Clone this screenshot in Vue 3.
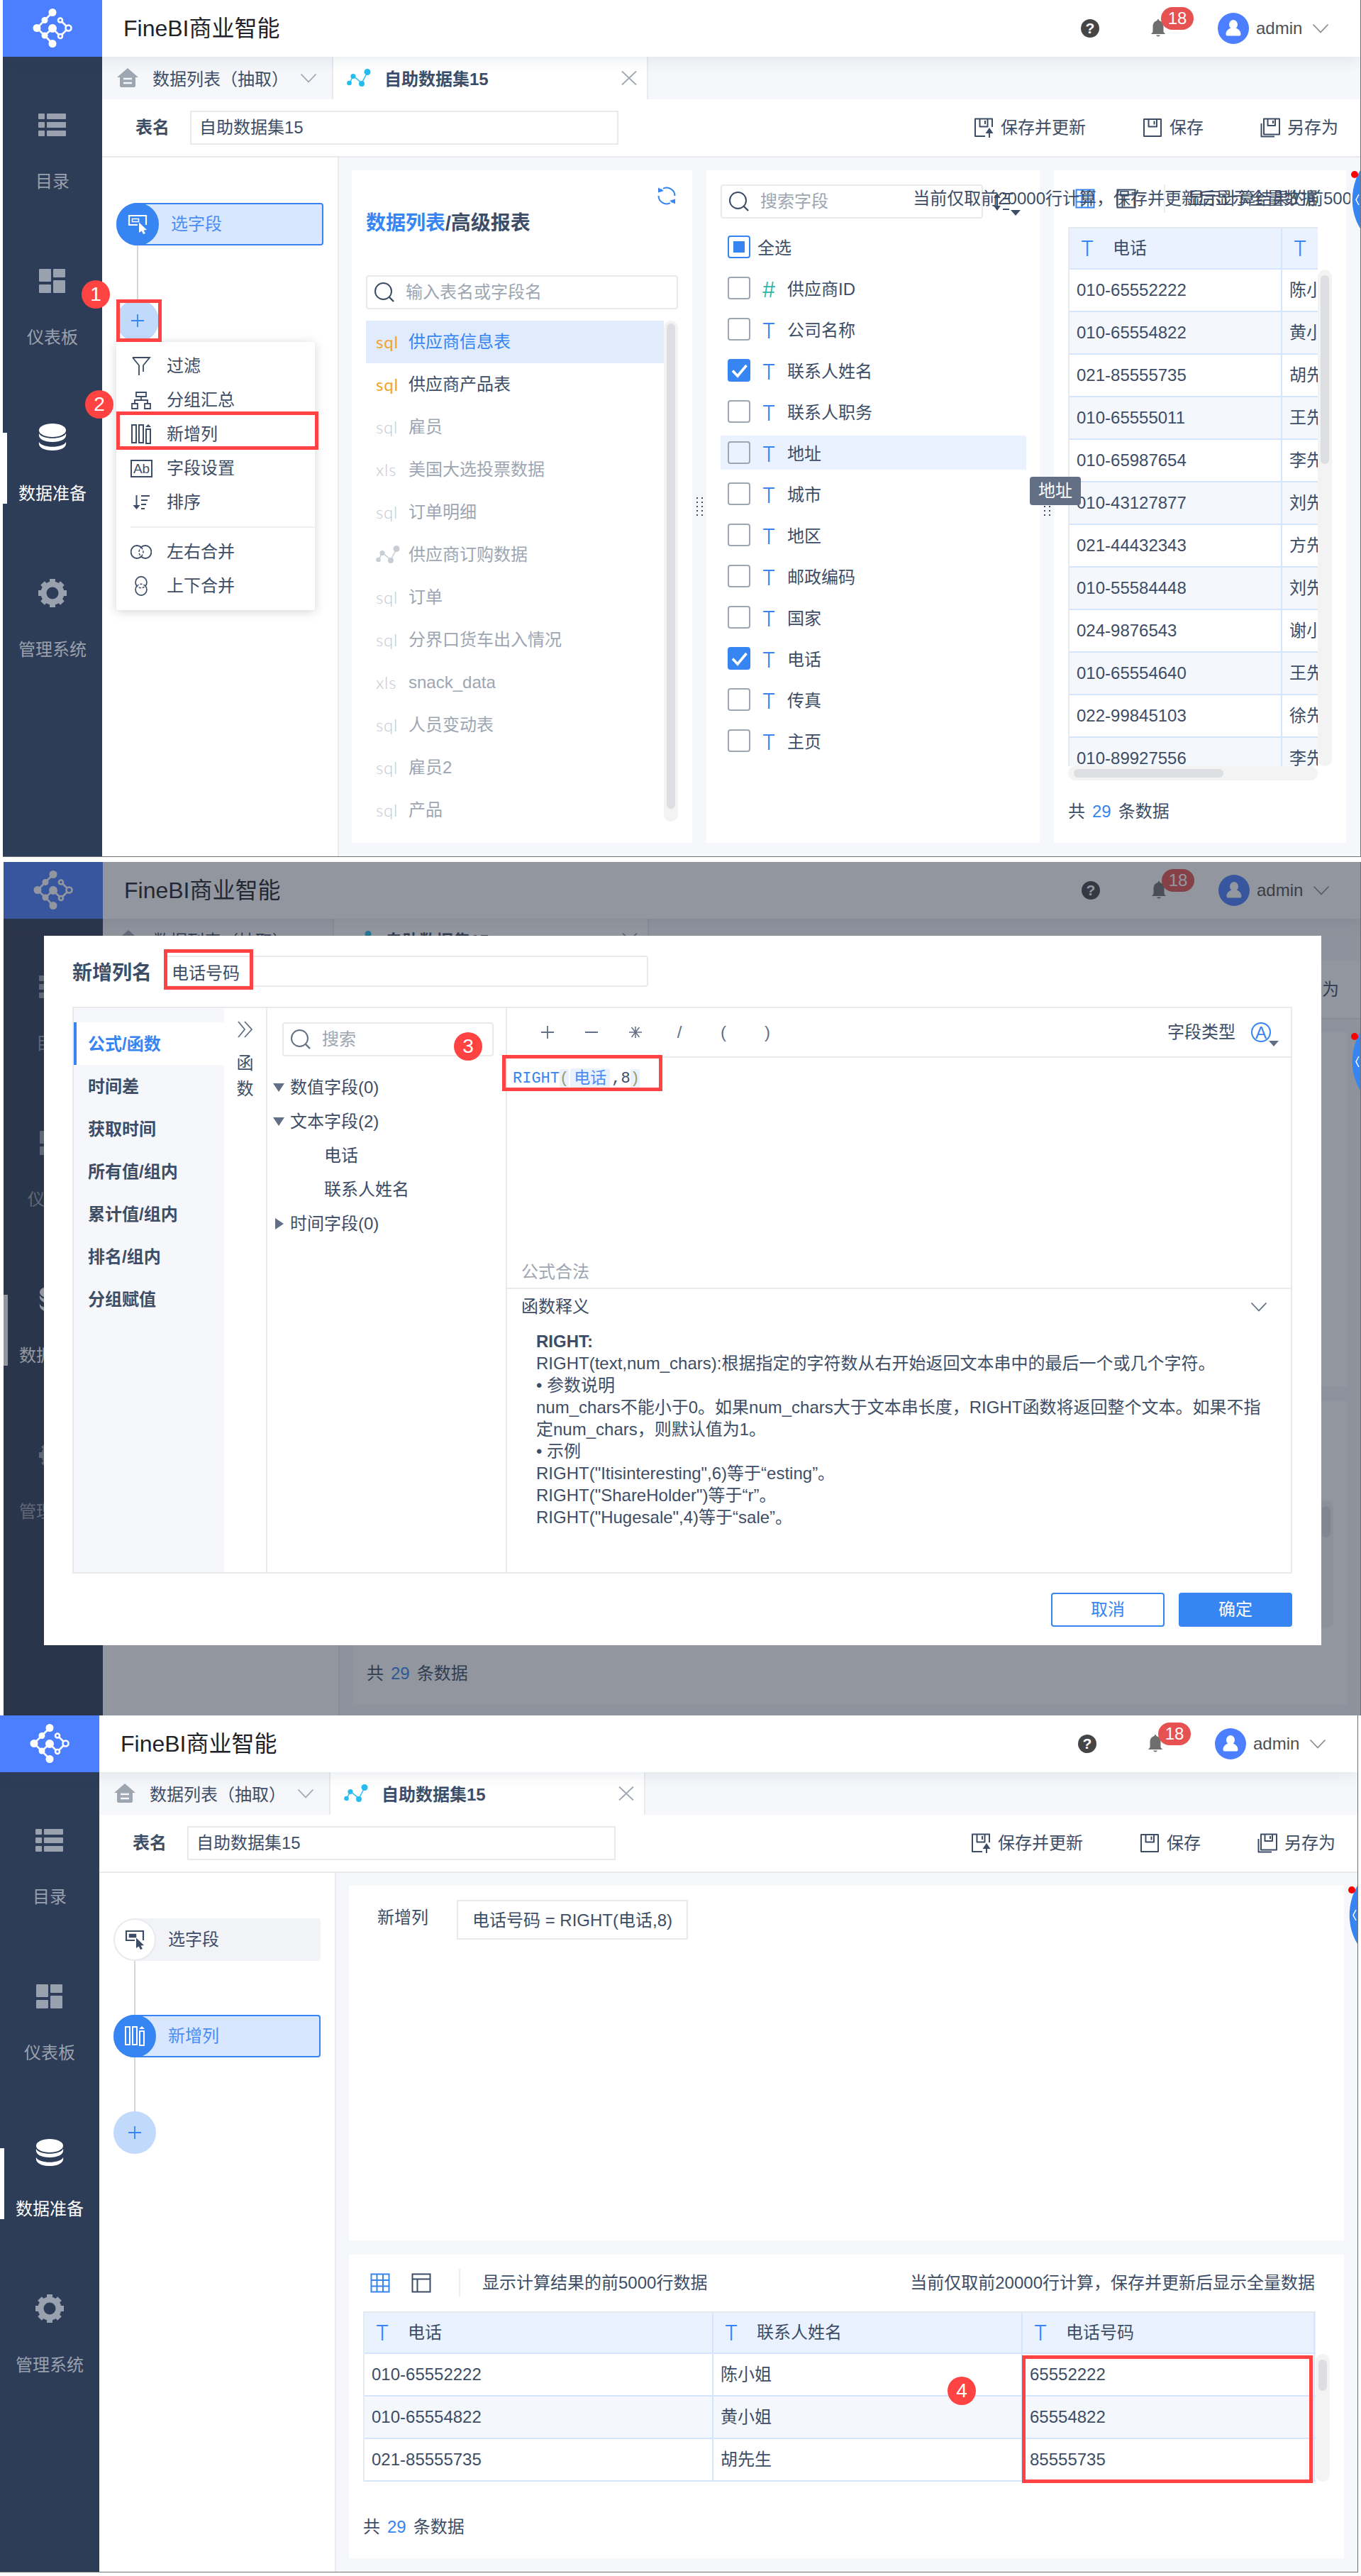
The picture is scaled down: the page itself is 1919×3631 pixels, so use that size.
<template>
  <!-- Icônes partagées -->
  <svg class="sprite" width="0" height="0">
    <symbol id="i-logo" viewBox="0 0 56 56">
      <path d="M28 5.5 17 16.5 6 27.5 17 38 28 49.5M17 38 28 28 39 39M39 16.5 50.5 27.5 39 39" fill="none" stroke="currentColor" stroke-width="2.6" />
      <g fill="currentColor">
        <circle cx="28" cy="5.5" r="5.5" /><circle cx="17" cy="16.5" r="4.5" /><circle cx="6" cy="27.5" r="5.5" />
        <circle cx="17" cy="38" r="4.5" /><circle cx="28" cy="49.5" r="5.5" /><circle cx="28" cy="28" r="6" />
      </g>
      <g fill="var(--ring)" stroke="currentColor" stroke-width="2.6">
        <circle cx="39" cy="16.5" r="3" /><circle cx="50.5" cy="27.5" r="4" /><circle cx="39" cy="39" r="3" />
      </g>
    </symbol>
    <symbol id="i-list" viewBox="0 0 40 34">
      <g fill="currentColor">
        <rect x="0" y="1" width="9" height="8" rx="1" /><rect x="12" y="1" width="27" height="8" rx="1" />
        <rect x="0" y="13" width="9" height="8" rx="1" /><rect x="12" y="13" width="27" height="8" rx="1" />
        <rect x="0" y="25" width="9" height="8" rx="1" /><rect x="12" y="25" width="27" height="8" rx="1" />
      </g>
    </symbol>
    <symbol id="i-board" viewBox="0 0 40 34">
      <g fill="currentColor">
        <rect x="1" y="0" width="17" height="18" rx="1" /><rect x="21" y="0" width="17" height="12" rx="1" />
        <rect x="1" y="22" width="17" height="12" rx="1" /><rect x="21" y="16" width="17" height="18" rx="1" />
      </g>
    </symbol>
    <symbol id="i-data" viewBox="0 0 40 38">
      <g fill="currentColor">
        <ellipse cx="20" cy="9.500" rx="19" ry="9.500" />
        <path d="M1 14c4 9 34 9 38 0 1.500 7-6 12-19 12S-.5 21 1 14z" />
        <path d="M1 26c4 9 34 9 38 0 1.500 7-6 12-19 12S-.5 33 1 26z" />
      </g>
    </symbol>
    <symbol id="i-gear" viewBox="0 0 40 40">
      <circle cx="20" cy="20" r="12.500" fill="none" stroke="currentColor" stroke-width="8" />
      <path d="M20 0v40M0 20h40M6 6l28 28M34 6 6 34" fill="none" stroke="currentColor" stroke-width="8" stroke-dasharray="6 28" />
    </symbol>
    <symbol id="i-home" viewBox="0 0 30 28">
      <path d="M15 0 30 13H26V25q0 2-2 2H6q-2 0-2-2V13H0z" fill="currentColor" />
      <path d="M9 15h12M9 21h12" stroke="var(--hole)" stroke-width="2.500" />
    </symbol>
    <symbol id="i-chart" viewBox="0 0 34 26">
      <path d="M4 20 9 10 21 20 29 5" fill="none" stroke="currentColor" stroke-width="1.500" />
      <g fill="currentColor"><circle cx="3.500" cy="20" r="3.300" /><circle cx="9" cy="10.500" r="3.600" /><circle cx="21" cy="21" r="4" /><circle cx="29" cy="4.500" r="4.500" /></g>
    </symbol>
    <symbol id="i-down" viewBox="0 0 24 14"><path d="M1.500 1.500 12 12.500 22.500 1.500" fill="none" stroke="currentColor" stroke-width="1.800" /></symbol>
    <symbol id="i-close" viewBox="0 0 22 20"><path d="M1 0.500 21 19.500M21 .5 1 19.500" fill="none" stroke="currentColor" stroke-width="1.800" /></symbol>
    <symbol id="i-bell" viewBox="0 0 22 26">
      <path d="M11 0c1.300 0 1.300 1 1.300 2 4.500 1 6.200 4.500 6.200 8.500V18l2.500 3H1l2.500-3v-7.500c0-4 1.700-7.500 6.200-8.500 0-1 0-2 1.300-2zM8 22.500h6q-1 2-3 2t-3-2z" fill="currentColor" />
    </symbol>
    <symbol id="i-user" viewBox="0 0 22 24">
      <path d="M11 0a6 6.500 0 0 1 6 6.500c0 2.500-1 4-2.300 5.200C19 13 21.500 16.500 21.500 20q0 2.500-2 2.500h-17q-2 0-2-2.500C.5 16.500 3 13 7.300 11.700 6 10.500 5 9 5 6.500A6 6.500 0 0 1 11 0z" fill="currentColor" />
    </symbol>
    <symbol id="i-save" viewBox="0 0 28 28">
      <path d="M2 2h24v24H2zM8.500 2v10.500h11.500V2M16.500 4.500v5" fill="none" stroke="currentColor" stroke-width="2" stroke-linejoin="round" />
    </symbol>
    <symbol id="i-saveup" viewBox="0 0 28 28">
      <path d="M16 26H2V1.500h24V13M8.500 1.500V12.500h11V1.500M16 4v5M22 19v9" fill="none" stroke="currentColor" stroke-width="2" stroke-linejoin="round" />
      <path d="M22 14l5.500 8h-11z" fill="currentColor" />
    </symbol>
    <symbol id="i-saveas" viewBox="0 0 28 28">
      <path d="M5 1.500h22v22H5zM10.500 1.500V11H21V1.500M18 4v4M1.500 8v18.500H20" fill="none" stroke="currentColor" stroke-width="2" stroke-linejoin="round" />
    </symbol>
    <symbol id="i-pick" viewBox="0 0 28 28">
      <path d="M14 15H2V2h24v13" fill="none" stroke="currentColor" stroke-width="2.200" />
      <path d="M6.500 6.500h9v4h-9z" fill="var(--fill)" stroke="currentColor" stroke-width="1.500" />
      <path d="M16 11.500 27 22l-4.500.5L25 27l-3 1-2.300-4.600L16 26z" fill="currentColor" />
    </symbol>
    <symbol id="i-cols" viewBox="0 0 30 28">
      <path d="M2 1h6v25H2zM12 1h6v25h-6zM22 7h6v20h-6z" fill="none" stroke="currentColor" stroke-width="2" />
      <path d="M25 0l4 4h-8z" fill="currentColor" />
    </symbol>
    <symbol id="i-filter" viewBox="0 0 30 28"><path d="M3 2h24L18 13v9M3 2l9 11v14M18 13v9" fill="none" stroke="currentColor" stroke-width="1.800" /></symbol>
    <symbol id="i-group" viewBox="0 0 30 28"><path d="M8 3h14v6H8zM2 19h8v7H2zM20 19h8v7h-8zM15 9v5M6 19v-5h18v5" fill="none" stroke="currentColor" stroke-width="1.800" /></symbol>
    <symbol id="i-sort" viewBox="0 0 30 28">
      <path d="M8.500 4v18M15 5h12M15 11h9M15 17h7M15 23h5" fill="none" stroke="currentColor" stroke-width="2" /><path d="M3.500 18h10l-5 6z" fill="currentColor" />
    </symbol>
    <symbol id="i-joinh" viewBox="0 0 30 28">
      <path d="M15 7.500A8.500 9 0 1 0 15 20.500M15 7.500A8.500 9 0 1 1 15 20.500" fill="none" stroke="currentColor" stroke-width="1.800" />
      <path d="M15 7.500Q21 14 15 20.500Q9 14 15 7.500z" fill="none" stroke="currentColor" stroke-width="1.500" stroke-dasharray="3.500 2" />
    </symbol>
    <symbol id="i-joinv" viewBox="0 0 30 30">
      <path d="M8.500 15A8.500 8.500 0 1 1 21.500 15M8.500 15A8.500 8.500 0 1 0 21.500 15" fill="none" stroke="currentColor" stroke-width="1.800" />
      <path d="M8.500 15Q15 9 21.500 15Q15 21 8.500 15z" fill="none" stroke="currentColor" stroke-width="1.500" stroke-dasharray="3.500 2" />
    </symbol>
    <symbol id="i-search" viewBox="0 0 28 28"><circle cx="12.500" cy="12.500" r="11.500" fill="none" stroke="currentColor" stroke-width="2" /><path d="M20.500 20.500 27 27" stroke="currentColor" stroke-width="2.400" /></symbol>
    <symbol id="i-refresh" viewBox="0 0 26 26">
      <path d="M8 2.800A11.500 11.500 0 0 1 24.500 13M18 23.200A11.500 11.500 0 0 1 1.500 13M4 6 6 3.500M22 20l-2 2.500" fill="none" stroke="currentColor" stroke-width="2" />
      <path d="M1 1.500 9 6 1 8.500zM25 24.500 17 20l8-2.500z" fill="currentColor" />
    </symbol>
    <symbol id="i-order" viewBox="0 0 40 36">
      <path d="M6 6v18M14 3h14M14 10h10M14 17h10M14 25h9" fill="none" stroke="currentColor" stroke-width="2.200" />
      <path d="M1 9l5-7 5 7zM1 20l5 7 5-7zM25 26h14l-7 8z" fill="currentColor" />
    </symbol>
    <symbol id="i-grid" viewBox="0 0 28 28"><path d="M1.500 1.500h25v25h-25zM9.500 1v26M18 1v26M1 10h26M1 18.500h26" fill="none" stroke="currentColor" stroke-width="2" /></symbol>
    <symbol id="i-layout" viewBox="0 0 28 28"><path d="M1.500 1.500h25v25h-25zM1 8.500h26M8.500 8.500V27" fill="none" stroke="currentColor" stroke-width="2" /></symbol>
    <symbol id="i-plus" viewBox="0 0 20 20"><path d="M10 1v18M1 10h18" stroke="currentColor" stroke-width="1.800" /></symbol>
    <symbol id="i-minus" viewBox="0 0 20 20"><path d="M1 10h18" stroke="currentColor" stroke-width="2" /></symbol>
    <symbol id="i-star" viewBox="0 0 20 20"><path d="M10 2v16M1 10h18M4.500 3 15.500 17M15.500 3 4.500 17" stroke="currentColor" stroke-width="1.500" /></symbol>
    <symbol id="i-more" viewBox="0 0 22 24"><path d="M1 1l9 11-9 11M10 1l10 11-10 11" fill="none" stroke="currentColor" stroke-width="1.800" /></symbol>
    <symbol id="i-check" viewBox="0 0 32 32"><path d="M7 16.500 14 24 26.500 9" fill="none" stroke="currentColor" stroke-width="3.600" /></symbol>
  </svg>

  <div class="page">
    <div v-for="screen in screens" :key="screen.id" class="screen" :class="'screen-' + screen.id">
      <header class="topbar">
        <div class="logo"><svg width="56" height="56"><use href="#i-logo" /></svg></div>
        <h1>FineBI商业智能</h1>
        <div class="help">?</div>
        <div class="bell"><svg width="22" height="26"><use href="#i-bell" /></svg><span>18</span></div>
        <div class="avatar"><svg width="22" height="24"><use href="#i-user" /></svg></div>
        <span class="user">admin</span>
        <svg class="user-arrow" width="24" height="14"><use href="#i-down" /></svg>
      </header>

      <div class="below">
        <nav class="sidebar">
          <div v-for="item in navItems" :key="item.label" class="nav-item" :class="{ active: item.active }">
            <div class="nav-icon"><svg width="40" :height="item.h"><use :href="'#i-' + item.icon" /></svg></div>
            <span>{{ item.label }}</span>
          </div>
        </nav>

        <div class="main">
          <div class="tabs">
            <div class="tab tab-home">
              <svg class="home" width="30" height="28"><use href="#i-home" /></svg>
              <span>数据列表（抽取）</span>
              <svg width="24" height="14"><use href="#i-down" /></svg>
            </div>
            <div class="tab tab-current">
              <svg class="chart" width="34" height="26"><use href="#i-chart" /></svg>
              <b>自助数据集15</b>
              <svg class="close" width="22" height="20"><use href="#i-close" /></svg>
            </div>
          </div>

          <div class="namebar">
            <b>表名</b>
            <div class="name-input">自助数据集15</div>
            <div class="actions">
              <div class="action a1"><svg width="28" height="28"><use href="#i-saveup" /></svg>保存并更新</div>
              <div class="action a2"><svg width="28" height="28"><use href="#i-save" /></svg>保存</div>
              <div class="action a3"><svg width="28" height="28"><use href="#i-saveas" /></svg>另存为</div>
            </div>
          </div>

          <div class="workspace">
            <div class="flow">
              <template v-for="step in screen.steps" :key="step.label">
                <div class="step" :class="{ on: step.on }">
                  <div class="step-dot"><svg :width="step.icon === 'cols' ? 32 : 28" height="28"><use :href="'#i-' + step.icon" /></svg></div>
                  <span>{{ step.label }}</span>
                </div>
                <div class="wire"></div>
              </template>
              <div class="add"><svg width="20" height="20"><use href="#i-plus" /></svg></div>

              <div v-if="screen.id === 1" class="menu">
                <div v-for="m in menu" :key="m.label" class="menu-item" :class="{ split: m.split }">
                  <span v-if="m.icon === 'ab'" class="ab">Ab</span>
                  <svg v-else width="30" height="28"><use :href="'#i-' + m.icon" /></svg>
                  {{ m.label }}
                </div>
              </div>
            </div>

            <div class="panels" :class="{ stacked: screen.id !== 1 }">
              <template v-if="screen.id === 1">
                <section class="card tables">
                  <div class="refresh"><svg width="26" height="26"><use href="#i-refresh" /></svg></div>
                  <h2><em>数据列表</em>/高级报表</h2>
                  <div class="search"><svg width="28" height="28"><use href="#i-search" /></svg>输入表名或字段名</div>
                  <div class="table-list">
                    <ul>
                      <li v-for="t in tables" :key="t.name" :class="t.state">
                        <svg v-if="t.type === 'chart'" class="tchart" width="34" height="26"><use href="#i-chart" /></svg>
                        <i v-else>{{ t.type }}</i>
                        <span>{{ t.name }}</span>
                      </li>
                    </ul>
                    <div class="vbar"><div></div></div>
                  </div>
                </section>
                <div class="grip"><i v-for="n in 10" :key="n"></i></div>
                <section class="card fields">
                  <div class="field-tools">
                    <div class="search"><svg width="28" height="28"><use href="#i-search" /></svg>搜索字段</div>
                    <svg class="order" width="40" height="36"><use href="#i-order" /></svg>
                  </div>
                  <div class="field all"><span class="box half"></span>全选</div>
                  <div v-for="f in fields" :key="f.name" class="field" :class="{ hover: f.hover }">
                    <span class="box" :class="{ checked: f.checked }"><svg v-if="f.checked" width="32" height="32"><use href="#i-check" /></svg></span>
                    <i class="type" :class="{ num: f.num }">{{ f.num ? '#' : 'T' }}</i>
                    {{ f.name }}
                  </div>
                </section>
                <div class="grip"><i v-for="n in 10" :key="n"></i></div>
              </template>

              <section v-else class="card formula">
                <span>新增列</span>
                <div class="formula-text">电话号码 = RIGHT(电话,8)</div>
              </section>

              <section class="card preview">
                <div class="preview-tools">
                  <svg class="blue" width="28" height="28"><use href="#i-grid" /></svg>
                  <svg class="layout" width="28" height="28"><use href="#i-layout" /></svg>
                  <div class="sep"></div>
                  <span class="limit">显示计算结果的前5000行数据</span>
                  <span class="note">当前仅取前20000行计算，保存并更新后显示全量数据</span>
                </div>
                <div class="grid-area">
                  <div class="data">
                    <div class="tr th">
                      <div v-for="(c, i) in screen.columns" :key="c" class="td" :class="'c' + i"><i class="type">T</i>{{ c }}</div>
                    </div>
                    <div v-for="row in screen.rows" :key="row[0]" class="tr">
                      <div v-for="(cell, i) in row" :key="i" class="td" :class="'c' + i">{{ cell }}</div>
                    </div>
                  </div>
                  <div class="vbar"><div></div></div>
                </div>
                <div v-if="screen.id === 1" class="hbar"><div></div></div>
                <p class="count">共<em>29</em>条数据</p>
              </section>
            </div>
          </div>
        </div>
      </div>

      <!-- Fenêtre d'ajout de colonne -->
      <div v-if="screen.id === 2" class="mask">
        <div class="dialog">
          <div class="dialog-head">
            <b>新增列名</b>
            <div class="col-name">电话号码</div>
          </div>
          <div class="dialog-body">
            <div class="kinds">
              <div v-for="(k, i) in kinds" :key="k" class="kind" :class="{ on: i === 0 }">{{ k }}</div>
            </div>
            <div class="fold">
              <svg width="22" height="24"><use href="#i-more" /></svg>
              <span>函</span><span>数</span>
            </div>
            <div class="tree">
              <div class="search"><svg width="28" height="28"><use href="#i-search" /></svg>搜索</div>
              <div v-for="n in tree" :key="n.label" class="node" :class="n.kind">{{ n.label }}</div>
            </div>
            <div class="editor">
              <div class="ops">
                <span v-for="op in ops" :key="op"><svg v-if="op.length > 1" width="20" height="20"><use :href="'#i-' + op" /></svg><template v-else>{{ op }}</template></span>
                <div class="coltype">字段类型<i>A</i></div>
              </div>
              <div class="code"><em>RIGHT</em><u>(</u><mark>电话</mark>,8<u>)</u></div>
              <div class="valid">公式合法</div>
              <div class="doc">
                <div class="doc-head">函数释义<svg width="24" height="14"><use href="#i-down" /></svg></div>
                <div class="doc-text">
                  <b>RIGHT:</b>
                  <p v-for="line in docLines" :key="line">{{ line }}</p>
                </div>
              </div>
            </div>
          </div>
          <div class="dialog-foot">
            <button>取消</button>
            <button class="primary">确定</button>
          </div>
        </div>
      </div>

      <svg class="drawer" width="20" height="100" viewBox="0 0 20 100">
        <path d="M20 10C5 35 5 68 20 92z" fill="#3685f2" />
        <path d="M18 44 14 51.500 18 59" fill="none" stroke="#fff" stroke-width="1.500" />
        <circle cx="12" cy="16" r="5" fill="#f00" />
      </svg>

      <div v-if="screen.id === 1" class="tip">地址</div>
      <div v-for="(m, i) in screen.frames" :key="'f' + i" class="frame" :style="{ left: m[0] + 'px', top: m[1] + 'px', width: m[2] + 'px', height: m[3] + 'px' }"></div>
      <div v-for="m in screen.marks" :key="m[0]" class="mark-dot" :style="{ left: m[1] - 20 + 'px', top: m[2] - 20 + 'px' }">{{ m[0] }}</div>
    </div>
  </div>
</template>

<script setup>
const navItems = [
  { label: '目录', icon: 'list', h: 34 },
  { label: '仪表板', icon: 'board', h: 34 },
  { label: '数据准备', icon: 'data', h: 38, active: true },
  { label: '管理系统', icon: 'gear', h: 40 }
]

const menu = [
  { icon: 'filter', label: '过滤' },
  { icon: 'group', label: '分组汇总' },
  { icon: 'cols', label: '新增列' },
  { icon: 'ab', label: '字段设置' },
  { icon: 'sort', label: '排序' },
  { icon: 'joinh', label: '左右合并', split: true },
  { icon: 'joinv', label: '上下合并' }
]

const tables = [
  { type: 'sql', name: '供应商信息表', state: 'used selected' },
  { type: 'sql', name: '供应商产品表', state: 'used' },
  { type: 'sql', name: '雇员' },
  { type: 'xls', name: '美国大选投票数据' },
  { type: 'sql', name: '订单明细' },
  { type: 'chart', name: '供应商订购数据' },
  { type: 'sql', name: '订单' },
  { type: 'sql', name: '分界口货车出入情况' },
  { type: 'xls', name: 'snack_data' },
  { type: 'sql', name: '人员变动表' },
  { type: 'sql', name: '雇员2' },
  { type: 'sql', name: '产品' }
]

const fields = [
  { name: '供应商ID', num: true },
  { name: '公司名称' },
  { name: '联系人姓名', checked: true },
  { name: '联系人职务' },
  { name: '地址', hover: true },
  { name: '城市' },
  { name: '地区' },
  { name: '邮政编码' },
  { name: '国家' },
  { name: '电话', checked: true },
  { name: '传真' },
  { name: '主页' }
]

const contacts = [
  ['010-65552222', '陈小姐'],
  ['010-65554822', '黄小姐'],
  ['021-85555735', '胡先生'],
  ['010-65555011', '王先生'],
  ['010-65987654', '李先生'],
  ['010-43127877', '刘先生'],
  ['021-44432343', '方先生'],
  ['010-55584448', '刘先生'],
  ['024-9876543', '谢小姐'],
  ['010-65554640', '王先生'],
  ['022-99845103', '徐先生'],
  ['010-89927556', '李先生']
]

const columns = ['电话', '联系人姓名', '电话号码']
const rows = contacts.slice(0, 3).map((c) => [...c, c[0].slice(-8)])

const pick = { icon: 'pick', label: '选字段' }
const newCol = { icon: 'cols', label: '新增列', on: true }

// frames : [x, y, largeur, hauteur] ; marks : [numéro, x, y]
const screens = [
  {
    id: 1,
    steps: [{ ...pick, on: true }],
    columns: columns.slice(0, 2),
    rows: contacts,
    frames: [[160, 422, 64, 60], [160, 580, 285, 54]],
    marks: [[1, 131, 415], [2, 136, 570]]
  },
  {
    id: 2,
    steps: [pick, newCol],
    columns,
    rows,
    frames: [[226, 123, 126, 57], [703, 272, 226, 51]],
    marks: [[3, 655, 260]]
  },
  {
    id: 3,
    steps: [pick, newCol],
    columns,
    rows,
    frames: [[1441, 902, 410, 180]],
    marks: [[4, 1356, 952]]
  }
]

const kinds = ['公式/函数', '时间差', '获取时间', '所有值/组内', '累计值/组内', '排名/组内', '分组赋值']

const tree = [
  { label: '数值字段(0)', kind: 'open' },
  { label: '文本字段(2)', kind: 'open' },
  { label: '电话', kind: 'leaf' },
  { label: '联系人姓名', kind: 'leaf' },
  { label: '时间字段(0)', kind: 'shut' }
]

const ops = ['plus', 'minus', 'star', '/', '(', ')']

const docLines = [
  'RIGHT(text,num_chars):根据指定的字符数从右开始返回文本串中的最后一个或几个字符。',
  '• 参数说明',
  'num_chars不能小于0。如果num_chars大于文本串长度，RIGHT函数将返回整个文本。如果不指',
  '定num_chars，则默认值为1。',
  '• 示例',
  'RIGHT("Itisinteresting",6)等于“esting”。',
  'RIGHT("ShareHolder")等于“r”。',
  'RIGHT("Hugesale",4)等于“sale”。'
]
</script>

<style>
body {
  background: #fff;
}
</style>

<style scoped>
.sprite {
  position: absolute;
}

.page {
  width: 1919px;
  height: 3631px;
  overflow: hidden;
  font-family: "Liberation Sans", "Noto Sans CJK SC", sans-serif;
  font-size: 24px;
  line-height: 36px;
  color: #3d4d66;
}

.page * {
  box-sizing: border-box;
}

.page svg {
  display: block;
  flex: none;
}

em, i {
  font-style: normal;
}

h1, h2, p, ul {
  margin: 0;
  padding: 0;
  font-weight: normal;
}

.screen {
  position: relative;
  width: 1915px;
  height: 1208px;
  border-right: 1px solid #6f7275;
  border-bottom: 1px solid #6f7275;
  background: #fff;
  overflow: hidden;
}

.screen-1 {
  margin: 0 0 7px 4px;
}

.screen-2 {
  margin-left: 5px;
  width: 1914px;
  height: 1203px;
  border-bottom: 0;
}

/* Barre du haut */
.topbar {
  position: relative;
  z-index: 1;
  display: flex;
  align-items: center;
  width: 1914px;
  height: 80px;
  background: #fff;
  box-shadow: 0 2px 22px rgba(60, 75, 110, 0.12);
}

.logo {
  --ring: #4b7fff;
  display: flex;
  align-items: center;
  justify-content: center;
  width: 140px;
  height: 80px;
  background: #4b7fff;
  color: #fff;
}

h1 {
  margin-left: 30px;
  font-size: 32px;
  color: #1f2329;
}

.help {
  width: 26px;
  height: 26px;
  margin-left: auto;
  border-radius: 50%;
  background: #454545;
  color: #fff;
  font-size: 21px;
  font-weight: bold;
  line-height: 26px;
  text-align: center;
}

.bell {
  position: relative;
  width: 22px;
  margin-left: 72px;
  color: #6e6e6e;
}

.bell span {
  position: absolute;
  left: 15px;
  top: -17px;
  width: 46px;
  height: 32px;
  border-radius: 16px;
  background: #e65251;
  color: #fff;
  line-height: 32px;
  text-align: center;
}

.avatar {
  display: flex;
  align-items: center;
  justify-content: center;
  width: 44px;
  height: 44px;
  margin-left: 73px;
  border-radius: 50%;
  background: #4b7fff;
  color: #fff;
}

.user {
  width: 65px;
  margin-left: 10px;
  color: #4f4f4f;
}

.user-arrow {
  margin: 0 44px 0 14px;
  color: #8c8c8c;
}

.below {
  display: flex;
  width: 1914px;
  height: 1127px;
}

/* Navigation gauche */
.sidebar {
  width: 140px;
  padding-top: 30px;
  background: #2d3c57;
  color: #9aa1ae;
}

.nav-item {
  position: relative;
  height: 220px;
  text-align: center;
}

.nav-icon {
  display: flex;
  align-items: center;
  justify-content: center;
  height: 132px;
}

.nav-item > span {
  display: block;
  margin-top: -4px;
}

.nav-item.active {
  color: #fff;
}

.nav-item.active::before {
  content: "";
  position: absolute;
  left: 0;
  top: 60px;
  width: 6px;
  height: 100px;
  background: #fff;
}

.main {
  flex: 1;
  min-width: 0;
}

.tabs {
  display: flex;
  height: 60px;
  background: #f5f7fa;
}

.tab {
  display: flex;
  align-items: center;
  border-right: 2px solid #e8eaed;
}

.tab-home {
  --hole: #f5f7fa;
  width: 326px;
  padding-left: 21px;
  color: #9ea6b2;
}

.tab-home span {
  width: 192px;
  margin: 4px 16px 0 20px;
  color: #3d4d66;
}

.tab-current {
  width: 444px;
  padding-left: 19px;
  background: #fff;
}

.tab-current b {
  margin: 4px 0 0 19px;
}

.chart {
  color: #25bdf0;
}

.close {
  margin: 0 14px 0 auto;
  color: #9ea6b2;
}

.namebar {
  display: flex;
  align-items: center;
  height: 82px;
  padding-left: 47px;
  border-bottom: 2px solid #e8eaed;
}

.name-input {
  width: 604px;
  height: 48px;
  margin-left: 29px;
  padding-left: 11px;
  border: 2px solid #e8eaed;
  line-height: 44px;
}

.actions {
  display: flex;
  margin-left: auto;
}

.action {
  display: flex;
  align-items: center;
  gap: 10px;
}

.a1 {
  margin-right: 80px;
}

.a2 {
  margin-right: 80px;
}

.a3 {
  margin-right: 31px;
}

.workspace {
  display: flex;
  height: 985px;
  background: #f5f7fa;
}

/* Étapes */
.flow {
  position: relative;
  width: 334px;
  padding: 64px 20px 0 20px;
  background: #fff;
  border-right: 2px solid #e8eaed;
}

.step {
  --fill: #3d4d66;
  display: flex;
  align-items: center;
  height: 60px;
  border-radius: 4px;
  background: linear-gradient(to right, #fff 30px, #f2f3f7 30px);
}

.step-dot {
  display: flex;
  align-items: center;
  justify-content: center;
  width: 60px;
  height: 60px;
  margin-right: 17px;
  border: 2px solid #e8eaed;
  border-radius: 50%;
  background: #fff;
}

.step.on {
  --fill: none;
  border: 2px solid #3685f2;
  border-left: 0;
  border-radius: 30px 4px 4px 30px;
  background: #d8e7fd;
  color: #4a8df5;
}

.step.on .step-dot {
  border-color: #3685f2;
  background: #3685f2;
  color: #fff;
}

.wire {
  width: 2px;
  height: 76px;
  margin-left: 29px;
  background: #d4d6da;
}

.add {
  display: flex;
  align-items: center;
  justify-content: center;
  width: 60px;
  height: 60px;
  border-radius: 50%;
  background: #c1d9fb;
  color: #3685f2;
}

.menu {
  position: absolute;
  left: 20px;
  top: 260px;
  width: 280px;
  height: 378px;
  padding: 10px 0 10px 20px;
  border-radius: 4px;
  background: #fff;
  box-shadow: 0 2px 14px rgba(45, 60, 87, 0.22);
}

.menu-item {
  display: flex;
  align-items: center;
  gap: 21px;
  height: 48px;
}

.menu-item.split {
  height: 60px;
  margin-top: 10px;
  padding-top: 10px;
  border-top: 2px solid #eeeff2;
}

.ab {
  width: 31px;
  height: 25px;
  margin-right: -1px;
  border: 2px solid #3d4d66;
  font-size: 19px;
  line-height: 21px;
  text-align: center;
}

/* Zones de travail */
.panels {
  display: flex;
  flex: 1;
  min-width: 0;
  padding: 18px 19px 19px 18px;
}

.panels.stacked {
  flex-direction: column;
  gap: 20px;
}

.card {
  background: #fff;
}

.tables {
  width: 480px;
  padding: 20px;
}

.refresh {
  display: flex;
  justify-content: flex-end;
  height: 35px;
  padding: 3px 3px 0 0;
  color: #3685f2;
}

h2 {
  font-size: 28px;
  font-weight: bold;
  line-height: 40px;
}

h2 em {
  color: #3685f2;
}

.search {
  display: flex;
  align-items: center;
  gap: 16px;
  height: 48px;
  padding-left: 10px;
  border: 2px solid #e8eaed;
  border-radius: 4px;
  color: #9ea6b2;
}

.search svg {
  color: #3d4d66;
}

.tables .search {
  margin: 53px 0 16px;
}

.table-list {
  display: flex;
  height: 706px;
  overflow: hidden;
}

.table-list ul {
  width: 420px;
  list-style: none;
}

.table-list li {
  display: flex;
  align-items: center;
  height: 60px;
  padding-left: 14px;
  color: #9ea6b2;
}

.table-list li i {
  width: 46px;
  font-family: Lato, "Open Sans", sans-serif;
  font-size: 24px;
  font-weight: 300;
  letter-spacing: 0.8px;
  color: #c4c8cf;
}

.table-list li .tchart {
  margin-right: 12px;
  color: #c8ccd3;
}

.table-list li.used {
  color: #3d4d66;
}

.table-list li.used i {
  color: #f5a32f;
  font-weight: 400;
}

.table-list li.selected {
  background: #e0ebfc;
  color: #3685f2;
}

.vbar {
  width: 20px;
  padding: 4px;
  border-radius: 10px;
  background: #f3f3f3;
}

.vbar div {
  height: 684px;
  border-radius: 6px;
  background: #dcdee2;
}

.grip {
  display: grid;
  grid-template-columns: 2px 2px;
  grid-auto-rows: 2px;
  gap: 4px 5px;
  align-content: center;
  justify-content: center;
  width: 20px;
}

.grip i {
  background: #3d4d66;
}

.fields {
  width: 470px;
  padding: 20px 19px 0 20px;
}

.field-tools {
  display: flex;
  gap: 14px;
  margin-bottom: 16px;
}

.fields .search {
  width: 370px;
}

.order {
  margin-top: 10px;
}

.field {
  display: flex;
  align-items: center;
  height: 48px;
  margin-bottom: 10px;
  padding: 3px 0 0 10px;
}

.field.hover {
  background: #e9f2fe;
}

.box {
  display: flex;
  width: 32px;
  height: 32px;
  margin: -3px 16px 0 0;
  border: 2px solid #9ea6b2;
  border-radius: 4px;
}

.box.checked {
  border: 0;
  background: #3685f2;
  color: #fff;
}

.box.half {
  margin-right: 10px;
  padding: 6px;
  border-color: #3685f2;
}

.box.half::before {
  content: "";
  flex: 1;
  background: #3685f2;
}

.type {
  width: 20px;
  margin-right: 16px;
  font-family: Inter, sans-serif;
  font-size: 30px;
  font-weight: 300;
  text-align: center;
  color: #3685f2;
}

.type.num {
  color: #2bb5a8;
}

/* Aperçu des données */
.preview {
  display: flex;
  flex-direction: column;
  padding: 20px;
}

.screen-1 .preview {
  width: 412px;
}

.stacked .preview {
  height: 428px;
}

.preview-tools {
  position: relative;
  display: flex;
  align-items: center;
  height: 40px;
  margin-bottom: 20px;
  padding-left: 10px;
  white-space: nowrap;
}

.blue {
  color: #3685f2;
}

.layout {
  margin-left: 30px;
}

.sep {
  flex: none;
  width: 2px;
  height: 40px;
  margin: 0 31px 0 39px;
  background: #eeeff2;
}

.note {
  margin: 0 21px 0 auto;
}

.screen-1 .note {
  position: absolute;
  right: 20px;
  margin: 0;
}

.screen-1 .limit {
  width: 230px;
  flex: none;
  overflow: hidden;
}

.grid-area {
  display: flex;
  flex: none;
  height: 240px;
}

.screen-1 .grid-area {
  height: 760px;
}

.data {
  flex: 1;
  min-width: 0;
  overflow: hidden;
  border-left: 2px solid #e8eaed;
}

.grid-area .vbar {
  margin-top: 60px;
  padding-top: 8px;
}

.grid-area .vbar div {
  height: 44px;
}

.screen-1 .grid-area .vbar div {
  height: 266px;
}

.tr {
  display: flex;
  height: 60px;
  border-bottom: 2px solid #d5e6fc;
}

.tr:nth-child(odd) {
  background: #f4f8fd;
}

.tr.th {
  border-top: 2px solid #e3e7ee;
  background: #e9f2fe;
}

.td {
  flex: none;
  display: flex;
  align-items: center;
  width: 436px;
  padding-left: 10px;
  border-right: 2px solid #d5e6fc;
  white-space: nowrap;
}

.c0 {
  width: 492px;
}

.c2 {
  width: 412px;
}

.screen-1 .c0 {
  width: 300px;
}

.th .td {
  padding-left: 15px;
}

.th .type {
  margin-right: 26px;
}

.hbar {
  flex: none;
  width: 352px;
  height: 20px;
  padding: 4px 8px;
  border-radius: 10px;
  background: #f3f3f3;
}

.hbar div {
  width: 211px;
  height: 12px;
  border-radius: 6px;
  background: #dcdee2;
}

.count {
  margin-top: auto;
  padding-bottom: 6px;
}

.count em {
  margin: 0 10px;
  color: #3685f2;
}

.formula {
  display: flex;
  height: 500px;
  padding: 20px 40px;
}

.formula span {
  width: 112px;
  padding-top: 7px;
}

.formula-text {
  height: 56px;
  padding: 0 20px;
  border: 2px solid #e8eaed;
  line-height: 53px;
}

/* Boîte de dialogue */
.mask {
  position: absolute;
  z-index: 2;
  inset: 0;
  background: rgba(37, 45, 61, 0.5);
}

.dialog {
  width: 1801px;
  height: 1000px;
  margin: 104px 0 0 57px;
  padding: 28px 41px 26px 40px;
  background: #fff;
}

.dialog-head {
  display: flex;
  align-items: center;
  height: 44px;
  margin-bottom: 28px;
}

.dialog-head b {
  width: 129px;
  padding-top: 6px;
  font-size: 28px;
}

.col-name {
  width: 683px;
  height: 44px;
  padding-left: 9px;
  border: 2px solid #e8eaed;
  border-radius: 4px;
  line-height: 45px;
}

.dialog-body {
  display: flex;
  width: 1720px;
  height: 799px;
  border: 2px solid #e8eaed;
}

.kinds {
  width: 212px;
  padding-top: 20px;
  background: #f5f7fa;
}

.kind {
  height: 60px;
  padding-left: 20px;
  font-weight: bold;
  line-height: 61px;
}

.kind.on {
  padding-left: 16px;
  border-left: 4px solid #3685f2;
  background: #fff;
  color: #3685f2;
}

.fold {
  display: flex;
  flex-direction: column;
  align-items: center;
  width: 61px;
  padding-top: 18px;
  border-right: 2px solid #e8eaed;
}

.fold svg {
  margin-bottom: 18px;
  color: #626f84;
}

.tree {
  width: 338px;
  border-right: 2px solid #e8eaed;
}

.tree .search {
  width: 298px;
  margin: 20px 0 20px 21px;
}

.tree .search svg {
  color: #626f84;
}

.node {
  display: flex;
  align-items: center;
  height: 48px;
}

.node::before {
  content: "";
  width: 0;
  margin: 0 8px 0 8px;
  border: 8px solid transparent;
}

.node.open::before {
  border-top: 12px solid #626f84;
  border-bottom: 0;
}

.node.shut::before {
  margin: 0 9px 0 11px;
  border-left: 12px solid #626f84;
  border-right: 0;
}

.node.leaf {
  padding-left: 48px;
}

.editor {
  display: flex;
  flex: 1;
  flex-direction: column;
}

.ops {
  display: flex;
  align-items: center;
  height: 70px;
  padding-left: 26px;
  border-bottom: 2px solid #e8eaed;
  color: #626f84;
}

.ops > span {
  display: flex;
  justify-content: center;
  width: 62px;
}

.coltype {
  position: relative;
  display: flex;
  align-items: center;
  gap: 22px;
  margin: 0 28px 0 auto;
  color: #3d4d66;
}

.coltype i {
  width: 28px;
  height: 28px;
  border: 2px solid #3685f2;
  border-radius: 50%;
  color: #3685f2;
  line-height: 25px;
  text-align: center;
}

.coltype::after {
  content: "";
  position: absolute;
  right: -11px;
  bottom: -2px;
  border: 7px solid transparent;
  border-top: 8px solid #626f84;
  border-bottom: 0;
}

.code {
  display: flex;
  align-items: center;
  height: 60px;
  padding-left: 8px;
  font-family: "Liberation Mono", "Noto Sans CJK SC", monospace;
  font-size: 22px;
}

.code em {
  color: #3685f2;
}

.code u {
  background: #e9f2fe;
  color: #9a9a6a;
  line-height: 28px;
  text-decoration: none;
}

.code mark {
  margin: 0 2px;
  padding: 0 5px;
  border-radius: 3px;
  background: #e9f2fe;
  color: #4a8df5;
  font-size: 23px;
  line-height: 30px;
}

.valid {
  margin: auto 0 4px 20px;
  color: #9ea6b2;
}

.doc {
  height: 401px;
  border-top: 2px solid #e8eaed;
}

.doc-head {
  display: flex;
  align-items: center;
  justify-content: space-between;
  height: 50px;
  padding: 0 33px 0 20px;
}

.doc-head svg {
  color: #626f84;
}

.doc-text {
  padding: 8px 0 0 41px;
  line-height: 31px;
  white-space: nowrap;
}

.doc-text p {
  height: 31px;
}

.doc-text b {
  display: block;
  height: 31px;
}

.dialog-foot {
  display: flex;
  justify-content: flex-end;
  gap: 20px;
  margin-top: 27px;
}

button {
  width: 160px;
  height: 48px;
  padding: 0;
  border: 2px solid #3685f2;
  border-radius: 4px;
  background: #fff;
  color: #3685f2;
  font: inherit;
  line-height: 44px;
}

button.primary {
  background: #3685f2;
  color: #fff;
}

/* Éléments flottants et repères */
.drawer {
  position: absolute;
  z-index: 3;
  right: 0;
  top: 230px;
}

.tip {
  position: absolute;
  z-index: 3;
  left: 1448px;
  top: 672px;
  width: 72px;
  height: 40px;
  border-radius: 4px;
  background: #626f84;
  color: #fff;
  line-height: 40px;
  text-align: center;
}

.frame {
  position: absolute;
  z-index: 4;
  border: 5px solid #ff4343;
}

.mark-dot {
  position: absolute;
  z-index: 4;
  width: 40px;
  height: 40px;
  border-radius: 50%;
  background: #ff4343;
  color: #fff;
  font-size: 28px;
  line-height: 40px;
  text-align: center;
}
</style>
